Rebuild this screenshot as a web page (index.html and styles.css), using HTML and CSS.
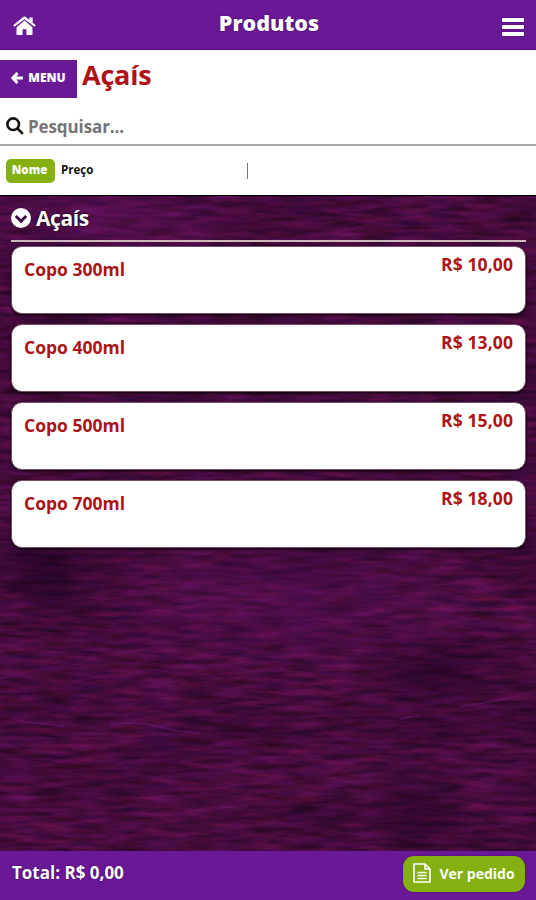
FILE: index.html
```html
<!DOCTYPE html>
<html lang="pt-BR">
<head>
    <meta charset="UTF-8">
    <meta name="viewport" content="width=device-width, initial-scale=1.0">
    <title>Produtos</title>
    <link rel="stylesheet" href="styles.css">
</head>
<body>
    <div class="app">
        <!-- Topo -->
        <header class="topbar">
            <svg class="icon-home" viewBox="0 0 24 20"><path d="M12 4.300 3.700 11.200V18.500q0 1 1 1h5.300v-6h4v6h5.300q1 0 1-1v-7.300z"/><path d="M12 .2q-.8 0-1.400.5L.2 9.300l1.300 1.600L12 2.900l10.500 8 1.300-1.600L20.500 6.500V1h-3.500v2.700L13.400.7Q12.800.2 12 .2z"/></svg>
            <h1>Produtos</h1>
            <div class="icon-bars"><span></span><span></span><span></span></div>
        </header>

        <!-- Categoria atual -->
        <div class="category">
            <button class="btn-menu">
                <svg class="icon-arrow" viewBox="0 0 12 12"><path d="M6.500 1 1.800 6l4.700 5M2 6h10"/></svg>
                <span>MENU</span>
            </button>
            <h2>Açaís</h2>
        </div>

        <!-- Pesquisa -->
        <div class="search">
            <svg class="icon-search" viewBox="0 0 18 18"><circle cx="7.200" cy="7.200" r="5.800"/><path d="M11.500 11.500 16.800 16.800"/></svg>
            <input type="text" placeholder="Pesquisar...">
        </div>

        <!-- Ordenação -->
        <div class="sort">
            <button class="sort-option active">Nome</button>
            <button class="sort-option">Preço</button>
            <span class="divider"></span>
        </div>

        <!-- Lista de produtos -->
        <main class="products">
            <svg class="wood" width="536" height="656">
                <defs>
                    <filter id="grain" x="0" y="0" width="100%" height="100%" color-interpolation-filters="sRGB">
                        <feTurbulence type="fractalNoise" baseFrequency="0.028 0.19" numOctaves="5" seed="21"/>
                        <feColorMatrix values=".32 .1 0 0 .08  .05 0 0 0 .025  .26 0 .12 0 .06  0 0 0 0 1"/>
                    </filter>
                    <filter id="stains" x="0" y="0" width="100%" height="100%" color-interpolation-filters="sRGB">
                        <feTurbulence type="fractalNoise" baseFrequency="0.008 0.018" numOctaves="3" seed="3"/>
                        <feColorMatrix values="0 0 0 0 .07  0 0 0 0 0  0 0 0 0 .09  1.600 0 0 0 -.62"/>
                    </filter>
                    <radialGradient id="shade"><stop offset="0" stop-color="#18001c" stop-opacity=".5"/><stop offset="1" stop-color="#18001c" stop-opacity="0"/></radialGradient>
                    <radialGradient id="glow"><stop offset="0" stop-color="#6b1272" stop-opacity=".32"/><stop offset="1" stop-color="#6b1272" stop-opacity="0"/></radialGradient>
                </defs>
                <rect width="536" height="656" filter="url(#grain)"/>
                <rect width="536" height="656" filter="url(#stains)" opacity=".4"/>
                <ellipse cx="290" cy="405" rx="200" ry="80" fill="url(#glow)"/>
                <ellipse cx="100" cy="20" rx="160" ry="60" fill="url(#glow)"/>
                <ellipse cx="45" cy="385" rx="60" ry="50" fill="url(#shade)"/>
                <ellipse cx="440" cy="475" rx="100" ry="45" fill="url(#shade)"/>
                <ellipse cx="415" cy="615" rx="60" ry="65" fill="url(#shade)"/>
                <path class="vein" d="M14 524q30 4 50 6M110 530q20-6 40-1l30 6 20 2"/>
                <path class="vein" d="M400 523l20-4M460 511l50-9"/>
            </svg>

            <h3 class="group">
                <svg class="icon-chevron" viewBox="0 0 20 20"><circle cx="10" cy="10" r="10"/><path d="M4.800 8 10 13.200 15.200 8"/></svg>
                <span>Açaís</span>
            </h3>
            <ul class="list">
                <li class="product"><span class="name">Copo 300ml</span><span class="price">R$ 10,00</span></li>
                <li class="product"><span class="name">Copo 400ml</span><span class="price">R$ 13,00</span></li>
                <li class="product"><span class="name">Copo 500ml</span><span class="price">R$ 15,00</span></li>
                <li class="product"><span class="name">Copo 700ml</span><span class="price">R$ 18,00</span></li>
            </ul>
        </main>

        <!-- Rodapé com o total -->
        <footer class="footer">
            <span class="total">Total: R$ 0,00</span>
            <button class="btn-order">
                <svg class="icon-file" viewBox="0 0 18 20"><path d="M1 1h11l5 5v13H1zM12 1v5h5M4.500 9.500h9M4.500 12.500h9M4.500 15.500h9"/></svg>
                <span>Ver pedido</span>
            </button>
        </footer>
    </div>
</body>
</html>
```
FILE: styles.css
```css
/* Configurações gerais */
* { box-sizing: border-box; }
body { margin: 0; font-family: "Open Sans", "Noto Sans", sans-serif; font-weight: 700; background-color: #fff; }
h1, h2, h3, ul { margin: 0; padding: 0; }
button, input { border: none; padding: 0; font: inherit; background: none; }
svg { display: block; flex: none; }
.app { display: flex; flex-direction: column; height: 900px; overflow: hidden; }

/* Topo */
.topbar { display: flex; align-items: center; justify-content: space-between; height: 50px; padding: 0 12px 0 13px; background-color: #6a1996; border-bottom: 1px solid #4c087c; color: #fff; }
.topbar h1 { font-size: 21.5px; font-weight: 800; line-height: 28px; margin-top: -4px; text-shadow: 0 0 2px #37045c; }
.icon-home { width: 23px; height: 20px; margin-top: 3px; fill: #fff; }
.icon-bars { display: flex; flex-direction: column; gap: 3px; margin-top: 4px; }
.icon-bars span { width: 22px; height: 4px; background-color: #fff; border-radius: 1px; box-shadow: 0 0 2px #37045c; }

/* Categoria */
.category { display: flex; height: 58px; padding-top: 10px; gap: 5px; }
.btn-menu { display: flex; align-items: center; justify-content: center; gap: 5px; width: 77px; height: 38px; padding-bottom: 3px; background-color: #6a1996; color: #fff; font-size: 12px; font-weight: 800; }
.icon-arrow { width: 12px; height: 12px; fill: none; stroke: #fff; stroke-width: 3; }
.category h2 { font-size: 27px; line-height: 30px; letter-spacing: -0.2px; color: #b01116; }

/* Pesquisa */
.search { display: flex; align-items: center; gap: 4px; height: 38px; padding-left: 6px; border-bottom: 2px solid #aaa; }
.icon-search { width: 18px; height: 18px; fill: none; stroke: #111; stroke-width: 2.6; }
.search input { flex: 1; font-size: 17px; letter-spacing: -0.1px; }
.search input::placeholder { color: #757575; opacity: 1; }

/* Ordenação */
.sort { display: flex; align-items: center; height: 49px; padding-left: 6px; }
.sort-option { height: 24px; padding-bottom: 3px; font-size: 11.5px; color: #111; }
.sort-option.active { width: 49px; margin-right: 6px; padding-right: 2px; border-radius: 5px; background-color: #84b012; color: #fff; font-weight: 800; }
.divider { width: 1px; height: 16px; margin-left: 154px; background-color: #777; }

/* Produtos */
.products { position: relative; flex: 1; padding: 0 10px 0 11px; border-top: 1px solid #000; background-color: #430b3f; overflow: hidden; }
.wood { position: absolute; top: 0; left: 0; }
.vein { fill: none; stroke: #7b1c91; stroke-width: 2; opacity: .35; }
.group { position: relative; display: flex; align-items: center; gap: 5px; height: 46px; border-bottom: 2px solid #cfb8bb; font-size: 21px; line-height: 28px; letter-spacing: -0.4px; color: #fff; text-shadow: 0 0 2px #000; }
.icon-chevron { width: 20px; height: 20px; fill: #fff; }
.icon-chevron path { fill: none; stroke: #3c0b3f; stroke-width: 3; }
.list { position: relative; display: flex; flex-direction: column; gap: 10px; padding-top: 4px; list-style: none; }
.product { display: flex; justify-content: space-between; height: 68px; padding: 5px 12px; border: 1px solid #78506c; border-radius: 11px; background-color: #fff; box-shadow: 0 1px 3px #000; color: #aa1518; }
.name { margin-top: 5px; font-size: 17.5px; line-height: 24px; }
.price { font-size: 17.5px; line-height: 24px; letter-spacing: 0.1px; }

/* Rodapé */
.footer { display: flex; justify-content: space-between; height: 49px; padding: 5px 11px 0 12px; background-color: #6a1996; color: #fff; }
.total { font-size: 17px; line-height: 33px; text-shadow: 0 0 2px #37045c; }
.btn-order { display: flex; align-items: center; justify-content: center; gap: 8px; width: 122px; height: 36px; padding-bottom: 2px; border-radius: 11px; background-color: #84b012; color: #fff; font-size: 14px; box-shadow: 0 0 2px #37045c; }
.icon-file { width: 18px; height: 20px; fill: none; stroke: #fff; stroke-width: 1.6; }
```
